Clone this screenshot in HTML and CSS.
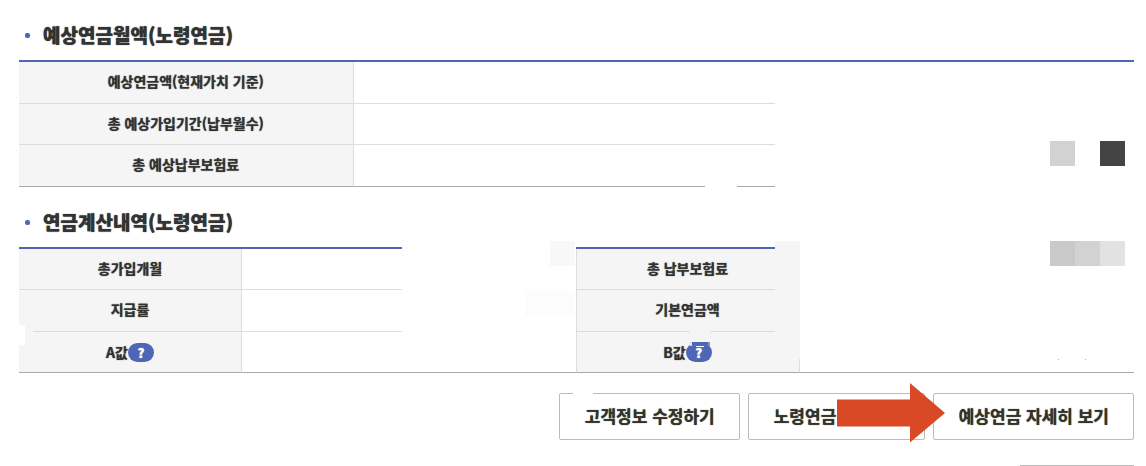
FILE: index.html
```html
<!DOCTYPE html>
<html lang="ko">
<head>
<meta charset="utf-8">
<meta name="viewport" content="width=device-width, initial-scale=1">
<title>예상연금월액</title>
<link rel="stylesheet" href="styles.css">
</head>
<body>
<main class="page">
  <section>
    <h2 class="title">예상연금월액(노령연금)</h2>
    <table class="info">
      <colgroup><col class="col-wide"><col></colgroup>
      <tbody>
        <tr><th scope="row">예상연금액(현재가치 기준)</th><td></td></tr>
        <tr class="short"><th scope="row">총 예상가입기간(납부월수)</th><td></td></tr>
        <tr><th scope="row">총 예상납부보험료</th><td></td></tr>
      </tbody>
    </table>
  </section>
  <section>
    <h2 class="title">연금계산내역(노령연금)</h2>
    <table class="info info-split">
      <colgroup><col class="col-label"><col class="col-wide"><col class="col-label"><col></colgroup>
      <tbody>
        <tr class="short"><th scope="row">총가입개월</th><td></td><th scope="row">총 납부보험료</th><td></td></tr>
        <tr><th scope="row">지급률</th><td></td><th scope="row">기본연금액</th><td></td></tr>
        <tr class="short"><th scope="row" class="with-help"><span class="term">A값<button class="help" type="button">?</button></span></th><td></td><th scope="row" class="with-help"><span class="term">B값<button class="help" type="button">?</button></span></th><td></td></tr>
      </tbody>
    </table>
  </section>
  <div class="actions">
    <button class="btn" type="button">고객정보 수정하기</button>
    <button class="btn btn-mid" type="button">노령연금</button>
    <button class="btn" type="button">예상연금 자세히 보기</button>
  </div>
  <div class="next-box"></div>
  <svg class="marks" width="1146" height="466" viewBox="0 0 1146 466" aria-hidden="true">
    <g fill="#fff">
      <rect x="775" y="62" width="371" height="178"/>
      <rect x="705" y="186" width="32" height="1"/>
      <rect x="402" y="240" width="174" height="132"/>
      <rect x="775" y="240" width="371" height="132"/>
      <rect x="19" y="325" width="6" height="20"/>
      <rect x="573" y="393" width="20" height="1"/>
    </g>
    <g fill="#f5f5f5">
      <rect x="775" y="241" width="25" height="131"/>
      <rect x="25" y="331" width="8" height="1"/>
      <rect x="690" y="331" width="20" height="1"/>
    </g>
    <rect x="550" y="241" width="25" height="25" fill="#f8f8f8"/>
    <rect x="525" y="291" width="50" height="25" fill="#fcfcfc"/>
    <rect x="799" y="359" width="1" height="13" fill="#ddd"/>
    <rect x="1050" y="141" width="25" height="25" fill="#d2d2d2"/>
    <rect x="1100" y="141" width="25" height="25" fill="#444"/>
    <rect x="1050" y="241" width="25" height="25" fill="#c9c9c9"/>
    <rect x="1075" y="241" width="25" height="25" fill="#d2d2d2"/>
    <rect x="1100" y="241" width="25" height="25" fill="#e2e2e2"/>
    <path d="M1058 359h1v1h-1zM1085 359h1v1h-1z" fill="#aaa"/>
    <rect x="690" y="342" width="2" height="4" fill="#dfe2ee"/>
    <rect x="692" y="342" width="16" height="4" fill="#4e66b6"/>
    <rect x="708" y="342" width="2" height="4" fill="#8292ca"/>
    <rect x="696" y="346" width="8" height="1" fill="#fff"/>
    <path d="M837 399.500H910V383L945 413L910 442.500V426.500H837z" fill="#d94926"/>
  </svg>
</main>
</body>
</html>
```
FILE: styles.css
```css
* { box-sizing: border-box; }

body {
  margin: 0;
  background: #fff;
  color: #333;
  font-family: "Noto Sans CJK KR", sans-serif;
  text-shadow: 0 0 1px currentColor;
}

.page {
  position: relative;
  padding: 0 12px 0 19px;
}

.title {
  display: flex;
  align-items: center;
  gap: 13px;
  margin: 0;
  padding: 10px 0 0 6px;
  font-size: 19px;
  font-weight: 900;
  line-height: 50px;
}

.title::before {
  content: "";
  width: 5px;
  height: 5px;
  border-radius: 2px;
  background: #4e66b6;
}

.info {
  width: 100%;
  table-layout: fixed;
  border-collapse: separate;
  border-spacing: 0;
  border-top: 2px solid #4e66b6;
  font-size: 14px;
  line-height: 20px;
}

.col-wide { width: 30%; }
.col-label { width: 20%; }

.info tr { height: 42px; }
.info .short { height: 41px; }

.info th,
.info td {
  padding: 0 0 3px;
  border-bottom: 1px solid #ddd;
}

.info th {
  border-right: 1px solid #ddd;
  background: #f5f5f5;
  font-weight: 700;
  text-align: center;
}

.info .with-help { padding-bottom: 0; }

.info-split th + td:not(:last-child) { border-right: 1px solid #ddd; }

.info tr:last-child th,
.info tr:last-child td { border-bottom-color: #aaa; }

.term {
  display: flex;
  align-items: center;
  justify-content: center;
  line-height: 18px;
}

.help {
  width: 26px;
  height: 19px;
  padding: 0;
  border: 0;
  border-radius: 10px;
  background: #4e66b6;
  color: #fff;
  font: 900 13px/19px "Noto Sans CJK KR", sans-serif;
  text-shadow: inherit;
}

.actions {
  display: flex;
  justify-content: flex-end;
  gap: 8px;
  margin-top: 20px;
}

.btn {
  height: 47px;
  padding: 0 24px 2px 25px;
  border: 1px solid #bbb;
  border-radius: 2px;
  background: #fff;
  color: #33332b;
  font: 700 17px/24px "Noto Sans CJK KR", sans-serif;
  text-shadow: 0 0 1px currentColor;
}

.btn-mid {
  min-width: 177px;
  text-align: left;
}

.next-box {
  width: 114px;
  margin: 25px 0 0 auto;
  border-top: 1px solid #bbb;
}

.marks {
  position: absolute;
  top: 0;
  left: 0;
  pointer-events: none;
}
```
